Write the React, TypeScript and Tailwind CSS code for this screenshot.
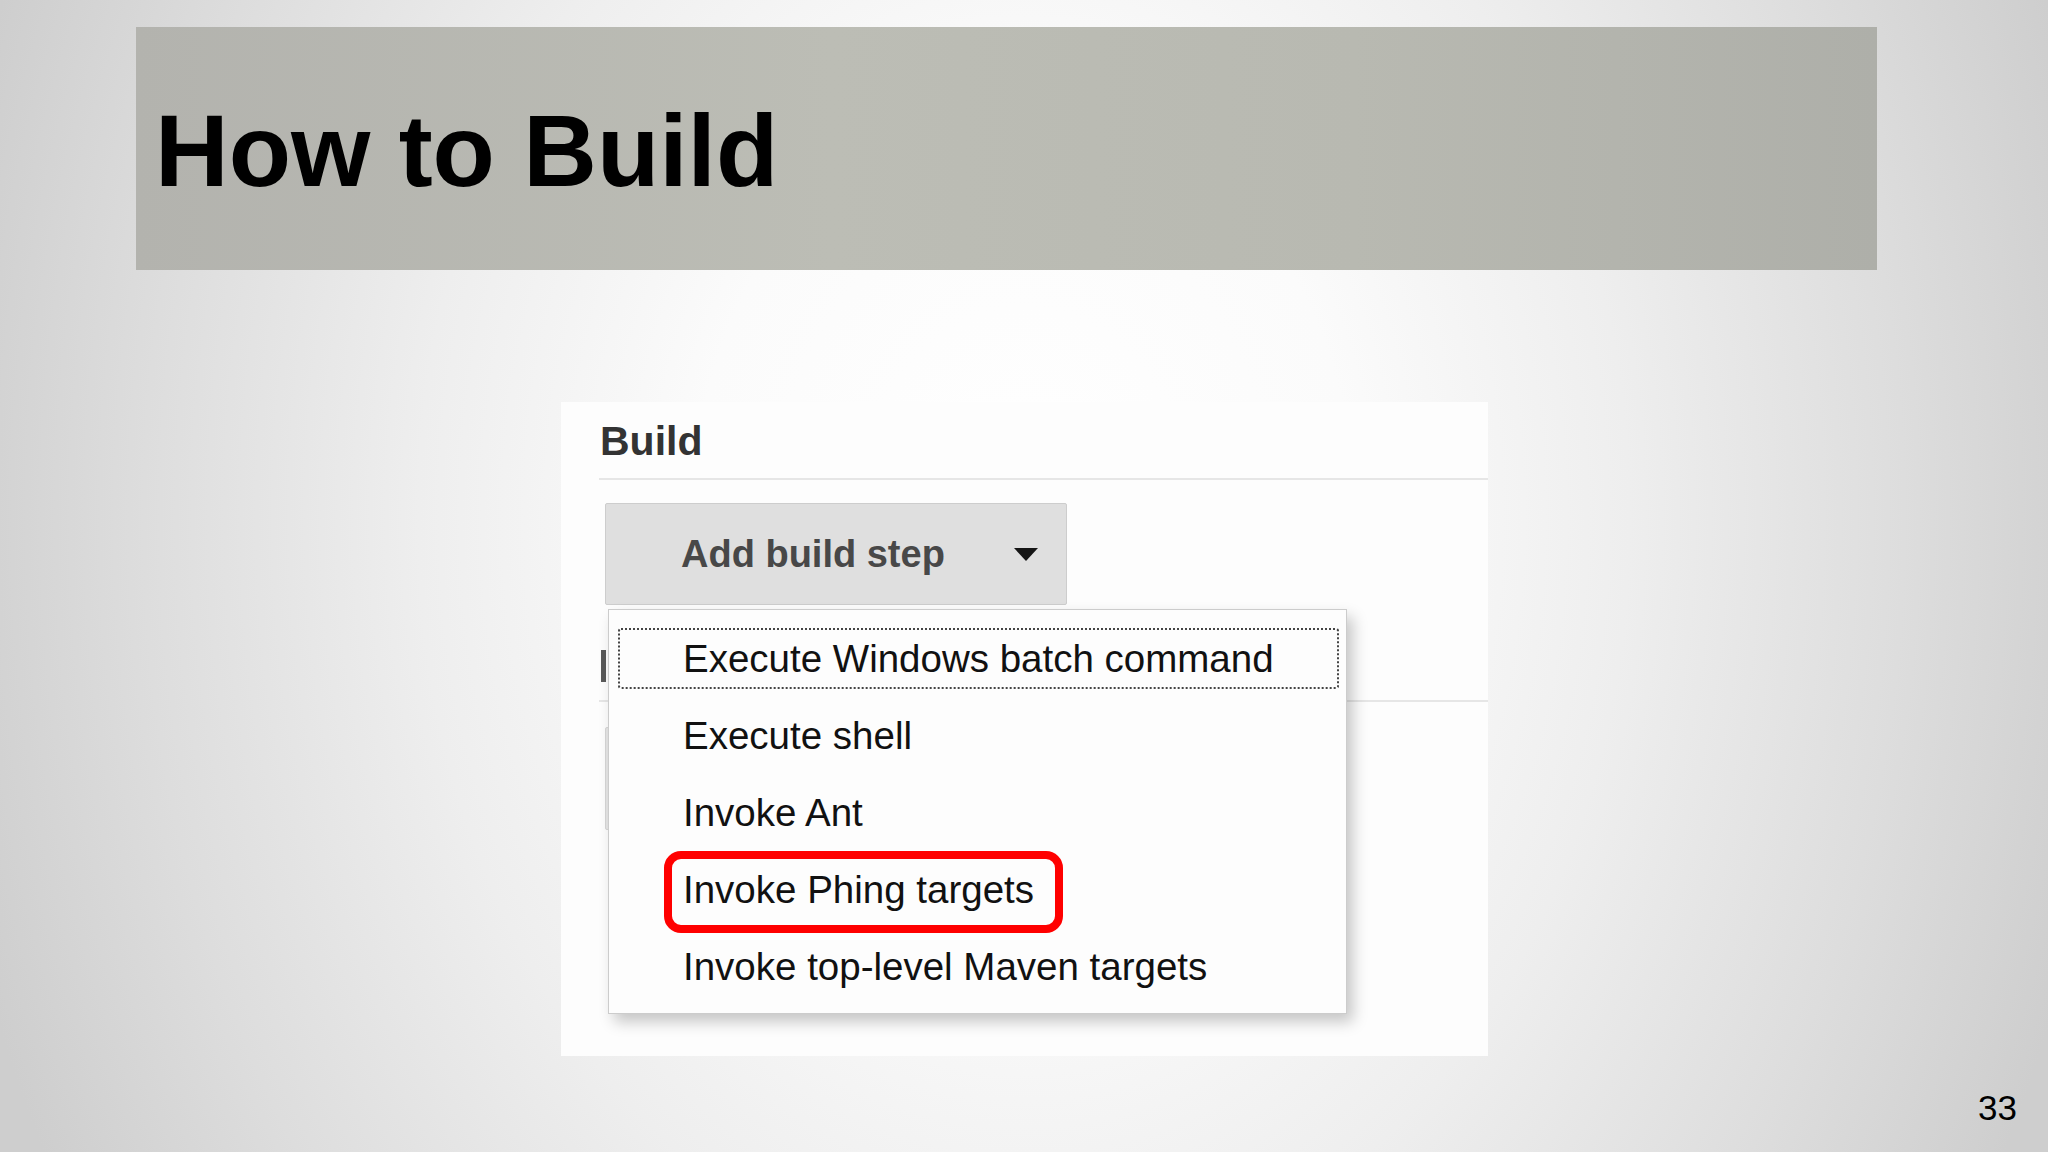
import React from "react";

const font = { fontFamily: '"Liberation Sans", Arial, sans-serif' };

function Caret() {
  return (
    <svg width="24" height="13" viewBox="0 0 24 13" className="shrink-0">
      <polygon points="0,0 24,0 12,13" fill="#151515" />
    </svg>
  );
}

const items = [
  "Execute Windows batch command",
  "Execute shell",
  "Invoke Ant",
  "Invoke Phing targets",
  "Invoke top-level Maven targets",
];

export default function App() {
  return (
    <div
      style={font}
      className="relative w-[2048px] h-[1152px] overflow-hidden flex flex-col bg-[radial-gradient(ellipse_1100px_1400px_at_50%_45%,#ffffff_0%,#fbfbfb_30%,#eeeeee_55%,#dddddd_80%,#cecece_100%)]"
    >
      {/* Title banner */}
      <div className="mt-[27px] ml-[136px] w-[1741px] h-[243px] shrink-0 bg-[linear-gradient(90deg,#b3b3ae_0%,#bcbdb5_40%,#b8b9b1_70%,#aeafa9_100%)] pl-[19px] pt-[73px]">
        <h1 className="text-[102px] leading-[102px] font-bold text-black tracking-normal">
          How to Build
        </h1>
      </div>

      {/* Screenshot panel */}
      <div className="mt-[132px] ml-[561px] w-[927px] h-[654px] shrink-0 bg-[#fdfdfd] pl-[38px] pt-[15px] flex flex-col">
        <div className="pl-[1px] text-[41px] leading-[48px] font-bold text-[#333333]">Build</div>
        <div className="mt-[13px] h-[2px] bg-[#e6e6e6]" />

        <div className="relative mt-[23px] ml-[6px] w-[462px]">
          <div className="h-[102px] rounded-[2px] border border-[#cdcdcd] bg-[#dfdfdf] flex items-center justify-between pl-[75px] pr-[28px]">
            <span className="text-[38px] leading-[44px] font-bold text-[#484848]">Add build step</span>
            <Caret />
          </div>

          {/* Dropdown menu */}
          <div className="absolute left-[3px] top-[106px] z-10 w-[739px] h-[405px] border border-[#cccccc] bg-[#fdfdfd] shadow-[6px_8px_14px_rgba(0,0,0,0.22)] pt-[18px] pl-[9px] pr-[7px] flex flex-col gap-[16px]">
            {items.map((t, i) => (
              <div
                key={t}
                className={
                  "h-[61px] flex items-center pl-[63px] rounded-[3px] border-2 text-[38.5px] leading-[44px] text-[#111111] " +
                  (i === 0 ? "border-dotted border-[#444444]" : "border-transparent")
                }
              >
                {t}
              </div>
            ))}
            <div className="absolute left-[55px] top-[241px] w-[399px] h-[82px] rounded-[17px] border-[8px] border-[#ff0000]" />
          </div>
        </div>

        {/* next section heading, hidden behind the menu: only its first stroke shows */}
        <div className="mt-[36px] h-[48px] pl-[2px] flex items-center">
          <div className="w-[5px] h-[32px] mt-[1px] bg-[#5a5a5a]" />
        </div>
        <div className="mt-[11px] h-[2px] bg-[#e6e6e6]" />
        <div className="mt-[25px] ml-[6px] w-[462px] h-[103px] rounded-[2px] border border-[#d6d6d6] bg-[#e6e6e6]" />
      </div>

      {/* Page number */}
      <div className="mt-[32px] pr-[31px] flex justify-end">
        <span className="text-[35px] leading-[40px] text-black">33</span>
      </div>
    </div>
  );
}
